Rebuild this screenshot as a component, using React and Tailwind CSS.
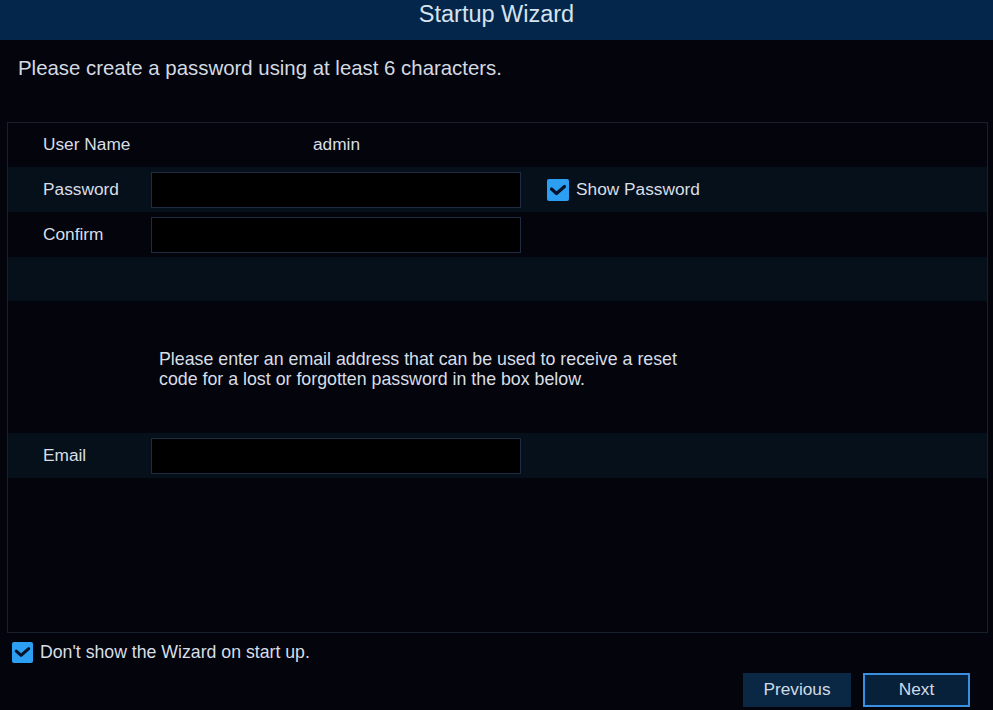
import React from "react";

function Check({ className = "" }) {
  return (
    <div className={"flex items-center justify-center rounded-[2px] bg-[#2d9ff2] " + className}>
      <svg width="22" height="22" viewBox="0 0 22 22">
        <path d="M4.5 10 L9.5 14.5 L17.5 7.5" fill="none" stroke="#06142a" strokeWidth="3.2" strokeLinecap="round" strokeLinejoin="round" />
      </svg>
    </div>
  );
}

function Input() {
  return <div className="w-[370px] h-[36px] border border-[#1e2b42] bg-black" />;
}

export default function App() {
  return (
    <div className="w-[993px] h-[710px] flex flex-col bg-[#03040c] text-[#d8dee6] font-['Liberation_Sans',Arial,sans-serif] overflow-hidden">
      <div className="h-[40px] shrink-0 flex items-center justify-center pb-[13px] bg-[#03264a] text-[23.5px] leading-[28px] text-[#d6e2ee]">
        Startup Wizard
      </div>
      <div className="h-[82px] shrink-0 pl-[18px] pt-[16px] text-[20.4px] leading-[24px] text-[#d4dae2]">
        Please create a password using at least 6 characters.
      </div>
      <div className="ml-[7px] w-[981px] h-[511px] shrink-0 border border-[#18202c] flex flex-col text-[17.3px]">
        <div className="h-[44px] flex items-center">
          <div className="w-[143px] pl-[35px]">User Name</div>
          <div className="ml-[162px]">admin</div>
        </div>
        <div className="h-[45px] flex items-center bg-[#06101a]">
          <div className="w-[143px] pl-[35px]">Password</div>
          <Input />
          <Check className="ml-[26px] w-[22px] h-[22px]" />
          <div className="ml-[7px]">Show Password</div>
        </div>
        <div className="h-[45px] flex items-center">
          <div className="w-[143px] pl-[35px]">Confirm</div>
          <Input />
        </div>
        <div className="h-[44px] bg-[#06101a]" />
        <div className="h-[132px] flex items-center pl-[151px] pt-[3px] text-[17.8px] leading-[20px]">
          <div>
            Please enter an email address that can be used to receive a reset
            <br />
            code for a lost or forgotten password in the box below.
          </div>
        </div>
        <div className="h-[45px] flex items-center bg-[#06101a]">
          <div className="w-[143px] pl-[35px]">Email</div>
          <Input />
        </div>
        <div className="flex-1" />
      </div>
      <div className="mt-[8px] h-[22px] flex items-center pl-[12px] text-[17.7px]">
        <Check className="w-[21px] h-[21px]" />
        <div className="ml-[7px]">Don't show the Wizard on start up.</div>
      </div>
      <div className="mt-[10px] flex justify-end pr-[23px] gap-[12px] text-[17.3px]">
        <div className="w-[108px] h-[34px] flex items-center justify-center bg-[#0a2843] text-[#d0dbe6]">
          Previous
        </div>
        <div className="w-[107px] h-[34px] flex items-center justify-center bg-[#062139] border-2 border-[#3a90e0] text-[#d0dbe6]">
          Next
        </div>
      </div>
    </div>
  );
}
